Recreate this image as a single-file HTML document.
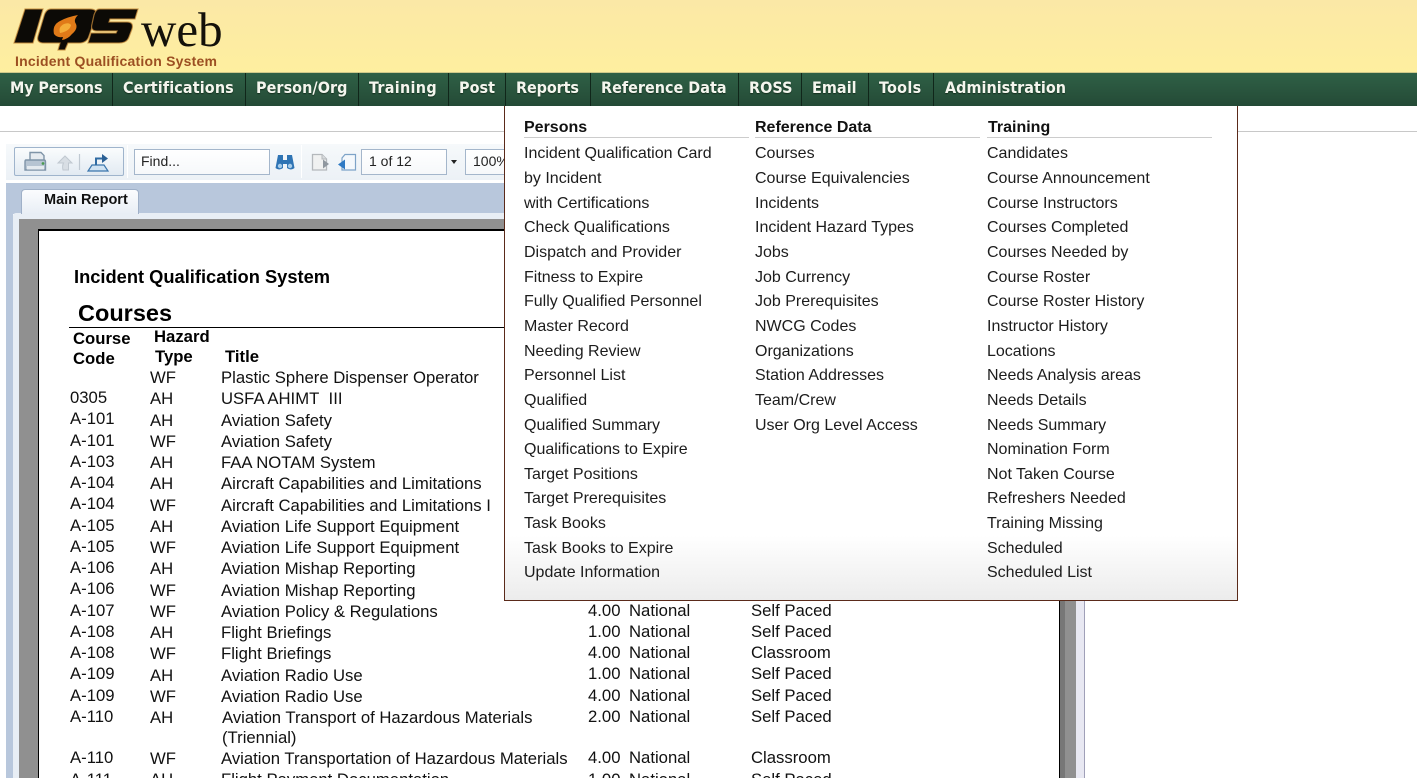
<!DOCTYPE html>
<html><head><meta charset="utf-8"><style>
html{margin:0;padding:0;background:#fff;width:1417px;height:778px;overflow:hidden}
body{margin:0;padding:0;width:1417px;height:778px;position:relative;overflow:hidden;font-family:"Liberation Sans",Arial,sans-serif;color:#000}
.a{position:absolute;white-space:nowrap}
.bx{position:absolute}
.w{position:absolute;left:0;width:0;height:0}
.nav{position:absolute;top:73px;height:33px;line-height:30px;color:#f4f6ee;font-family:"DejaVu Sans Condensed","DejaVu Sans",sans-serif;font-stretch:condensed;font-size:16px;font-weight:bold;letter-spacing:.05px;white-space:nowrap;text-shadow:0 1px 1px #16301f}
.sep{position:absolute;top:73px;height:33px;width:1px;background:#10261a}
.m{position:absolute;font-size:16px;line-height:20px;color:#1c1c1c;white-space:nowrap}
.mh{position:absolute;font-size:16px;line-height:20px;font-weight:bold;color:#111;white-space:nowrap}
.r{position:absolute;font-size:16.7px;line-height:20px;color:#111;white-space:nowrap}
.b{font-weight:bold;color:#000}
</style></head><body>
<div class="bx" style="left:0;top:0;width:1417px;height:73px;background:linear-gradient(#fbe8a6,#feef9f)"></div>
<svg class="bx" style="left:0;top:0" width="240" height="73" viewBox="0 0 240 73">
<g fill="#0c0a06" stroke="#c58a3a" stroke-width="1.2" stroke-opacity=".75">
<path d="M25 9H43L33 43H14Z"/>
<path d="M51 9H90Q98 9 96 16L89 36Q87 43 79 43H68L65 50H58L60 43H44Q36 43 38 36L44 16Q46 9 51 9Z"/>
<path d="M99 9H138L135 19H110L109 22H127Q134 22 132 29L129 37Q127 43 119 43H88L91 33H116L117 31H97Q90 31 92 24L94 15Q96 9 99 9Z"/>
</g>
<path d="M54 34Q52 25 60 21Q67 17 78 15Q73 20 76 24Q78 29 72 34Q68 39 62 40L63 37Q57 38 54 34Z" fill="#e07a18"/>
<path d="M60 33Q58 27 64 24Q69 22 71 25Q70 31 60 33Z" fill="#f4ad38"/>
<text x="141" y="46" font-family="Liberation Serif,serif" font-size="49" fill="#14110a">web</text>
<text x="15" y="66" font-family="Liberation Sans,sans-serif" font-size="14" font-weight="bold" fill="#9c4f22" textLength="202">Incident Qualification System</text>
</svg>

<div class="bx" style="left:0;top:73px;width:1417px;height:33px;background:linear-gradient(#2f6046,#244a36)"></div>
<div class="bx" style="left:0;top:72px;width:1417px;height:1px;background:#cfc98a"></div>
<div class="nav" style="left:10px;letter-spacing:-.1px">My Persons</div><div class="sep" style="left:112px"></div>
<div class="nav" style="left:123px;letter-spacing:.12px">Certifications</div><div class="sep" style="left:245px"></div>
<div class="nav" style="left:256px">Person/Org</div><div class="sep" style="left:358px"></div>
<div class="nav" style="left:369px;letter-spacing:.3px">Training</div><div class="sep" style="left:448px"></div>
<div class="nav" style="left:459px">Post</div><div class="sep" style="left:505px"></div>
<div class="nav" style="left:516px;letter-spacing:-.1px">Reports</div><div class="sep" style="left:590px"></div>
<div class="nav" style="left:601px;letter-spacing:0">Reference Data</div><div class="sep" style="left:738px"></div>
<div class="nav" style="left:749px">ROSS</div><div class="sep" style="left:801px"></div>
<div class="nav" style="left:812px">Email</div><div class="sep" style="left:868px"></div>
<div class="nav" style="left:879px;letter-spacing:.3px">Tools</div><div class="sep" style="left:933px"></div>
<div class="nav" style="left:945px;letter-spacing:.02px">Administration</div>

<div class="bx" style="left:0;top:131px;width:1417px;height:1px;background:#c8c8c8"></div>

<!-- report viewer -->
<div class="bx" style="left:6px;top:144px;width:1078px;height:36px;background:linear-gradient(#f6f9fb,#ecf1f6)"></div>
<div class="bx" style="left:11px;top:180px;width:1073px;height:2px;background:#fff"></div>
<div class="bx" style="left:6px;top:183px;width:1078px;height:31px;background:#b8c7dc"></div>
<div class="bx" style="left:6px;top:214px;width:7px;height:564px;background:#b8c7dc"></div>
<div class="bx" style="left:13px;top:213px;width:1071px;height:565px;background:#e8eef5;border-radius:3px 0 0 0"></div>
<div class="bx" style="left:1076px;top:213px;width:8px;height:565px;background:#e8e8f2"></div>
<div class="bx" style="left:1084px;top:213px;width:1px;height:565px;background:#a0a0b8"></div>
<div class="bx" style="left:19px;top:219px;width:1057px;height:559px;background:#909090"></div>
<div class="bx" style="left:1060px;top:229px;width:5px;height:549px;background:#777"></div>
<div class="bx" style="left:38px;top:229px;width:1020px;height:549px;background:#fff;border:solid #000;border-width:2px 1px 0 1px"></div>

<!-- tab -->
<div class="bx" style="left:21px;top:189px;width:116px;height:24px;background:linear-gradient(#fbfcfe,#e8eef5);border:1px solid #9fb0c8;border-bottom:0;border-radius:4px 4px 0 0"></div>
<div class="a" style="left:44px;top:191px;font-size:14.5px;line-height:18px;font-weight:bold;color:#111">Main Report</div>

<!-- toolbar -->
<div class="bx" style="left:14px;top:147px;width:108px;height:27px;border:1px solid #9fb4cc;border-radius:2px;background:linear-gradient(#fafcfd,#e2eaf2)"></div>
<svg class="bx" style="left:20px;top:148px" width="104" height="28" viewBox="0 0 104 28">
<path d="M10 4.500H21L24 7.500V13H10Z" fill="#e6ebf0" stroke="#7f94a8" stroke-width="1.4"/>
<path d="M6 12H24Q25.500 12 25.500 14V22H5V14Q5 12 6 12Z" fill="#b6c4d2" stroke="#7f94a8" stroke-width="1.4"/>
<rect x="7" y="18" width="17" height="3.500" fill="#e4eaef"/><circle cx="23" cy="15.500" r="1.400" fill="#4a9a50"/>
<path d="M45 8L52 15H48.500V22H43Q42 18 43.500 15H38Z" fill="#d8dee4" stroke="#c0c8d0"/>
<path d="M59.500 6V22" stroke="#c0c9d2" stroke-width="1.200"/>
<path d="M72 17H84L88 23H68Z" fill="#cfe2f2" stroke="#3a76ad" stroke-width="1.200"/>
<path d="M76 17V10.500H82" fill="none" stroke="#2f6ba3" stroke-width="2"/>
<path d="M82 6L88 10.500L82 15Z" fill="#2a5f94"/>
</svg>
<div class="bx" style="left:127px;top:145px;width:1px;height:33px;background:#fff"></div>
<div class="bx" style="left:134px;top:149px;width:134px;height:24px;background:linear-gradient(#fff,#f6f8fa);border:1px solid #a4b6cb"></div>
<div class="a" style="left:141px;top:152px;font-size:14px;line-height:18px;color:#222">Find...</div>
<svg class="bx" style="left:275px;top:154px" width="20" height="17" viewBox="0 0 20 17">
<path d="M3 1H8V6H12V1H17L19.500 14Q16 17 12 14V10H8V14Q4 17 .5 14Z" fill="#2f74b4"/><circle cx="5" cy="12" r="2.200" fill="#a8cdea"/><circle cx="15" cy="12" r="2.200" fill="#a8cdea"/>
</svg>
<div class="bx" style="left:301px;top:145px;width:1px;height:33px;background:#fff"></div>
<svg class="bx" style="left:309px;top:151px" width="48" height="22" viewBox="0 0 48 22">
<path d="M3.500 3.500H13L17.500 8V19H3.500Z" fill="#f0f1f1" stroke="#b4b8bc" stroke-width="1.300"/><path d="M13 3.500V8H17.500" fill="#d8dbde" stroke="#b4b8bc"/><path d="M14 8.500L20 13L14 17.500Z" fill="#8f979f"/>
<path d="M36 3.500H46.500V19H33V7Z" fill="#f4f8fc" stroke="#7da3c8" stroke-width="1.200"/><path d="M36 8.500L29 13.500L36 18.500Z" fill="#2f7ac4"/>
</svg>
<div class="bx" style="left:361px;top:149px;width:84px;height:24px;background:linear-gradient(#fff,#f6f8fa);border:1px solid #a4b6cb"></div>
<div class="a" style="left:369px;top:152px;font-size:14px;line-height:18px;color:#222">1 of 12</div>
<div class="bx" style="left:451px;top:160px;width:0;height:0;border:3.5px solid transparent;border-top:4px solid #222;border-bottom:0"></div>
<div class="bx" style="left:465px;top:149px;width:60px;height:24px;background:linear-gradient(#fff,#f6f8fa);border:1px solid #a4b6cb"></div>
<div class="a" style="left:473px;top:152px;font-size:14px;line-height:18px;color:#222">100%</div>

<!-- report content -->
<div class="a b" style="left:74px;top:266px;font-size:18.3px;line-height:22px">Incident Qualification System</div>
<div class="a b" style="left:78px;top:299px;font-size:23.5px;line-height:28px">Courses</div>
<div class="bx" style="left:69px;top:327px;width:440px;height:1px;background:#000"></div>
<div class="w" style="top:1px">
<div class="r b" style="left:73px;top:328px">Course</div>
<div class="r b" style="left:73px;top:348px">Code</div>
<div class="r b" style="left:154px;top:326px">Hazard</div>
<div class="r b" style="left:155px;top:346px">Type</div>
<div class="r b" style="left:225px;top:346px">Title</div>

<div class="r" style="left:150px;top:367px">WF</div><div class="r" style="left:221px;top:367px">Plastic Sphere Dispenser Operator</div>
<div class="r" style="left:70px;top:387px">0305</div><div class="r" style="left:150px;top:388px">AH</div><div class="r" style="left:221px;top:388px">USFA AHIMT&nbsp; III</div>
<div class="r" style="left:70px;top:408px">A-101</div><div class="r" style="left:150px;top:410px">AH</div><div class="r" style="left:221px;top:410px">Aviation Safety</div>
<div class="r" style="left:70px;top:430px">A-101</div><div class="r" style="left:150px;top:431px">WF</div><div class="r" style="left:221px;top:431px">Aviation Safety</div>
<div class="r" style="left:70px;top:451px">A-103</div><div class="r" style="left:150px;top:452px">AH</div><div class="r" style="left:221px;top:452px">FAA NOTAM System</div>
<div class="r" style="left:70px;top:472px">A-104</div><div class="r" style="left:150px;top:473px">AH</div><div class="r" style="left:221px;top:473px">Aircraft Capabilities and Limitations</div>
<div class="r" style="left:70px;top:493px">A-104</div><div class="r" style="left:150px;top:495px">WF</div><div class="r" style="left:221px;top:495px">Aircraft Capabilities and Limitations I</div>
<div class="r" style="left:70px;top:515px">A-105</div><div class="r" style="left:150px;top:516px">AH</div><div class="r" style="left:221px;top:516px">Aviation Life Support Equipment</div>
<div class="r" style="left:70px;top:536px">A-105</div><div class="r" style="left:150px;top:537px">WF</div><div class="r" style="left:221px;top:537px">Aviation Life Support Equipment</div>
<div class="r" style="left:70px;top:557px">A-106</div><div class="r" style="left:150px;top:558px">AH</div><div class="r" style="left:221px;top:558px">Aviation Mishap Reporting</div>
<div class="r" style="left:70px;top:578px">A-106</div><div class="r" style="left:150px;top:580px">WF</div><div class="r" style="left:221px;top:580px">Aviation Mishap Reporting</div>
<div class="r" style="left:70px;top:600px">A-107</div><div class="r" style="left:150px;top:601px">WF</div><div class="r" style="left:221px;top:601px">Aviation Policy &amp; Regulations</div><div class="r" style="left:588px;top:600px">4.00</div><div class="r" style="left:629px;top:600px">National</div><div class="r" style="left:751px;top:600px">Self Paced</div>
<div class="r" style="left:70px;top:621px">A-108</div><div class="r" style="left:150px;top:622px">AH</div><div class="r" style="left:221px;top:622px">Flight Briefings</div><div class="r" style="left:588px;top:621px">1.00</div><div class="r" style="left:629px;top:621px">National</div><div class="r" style="left:751px;top:621px">Self Paced</div>
<div class="r" style="left:70px;top:642px">A-108</div><div class="r" style="left:150px;top:643px">WF</div><div class="r" style="left:221px;top:643px">Flight Briefings</div><div class="r" style="left:588px;top:642px">4.00</div><div class="r" style="left:629px;top:642px">National</div><div class="r" style="left:751px;top:642px">Classroom</div>
<div class="r" style="left:70px;top:663px">A-109</div><div class="r" style="left:150px;top:665px">AH</div><div class="r" style="left:221px;top:665px">Aviation Radio Use</div><div class="r" style="left:588px;top:663px">1.00</div><div class="r" style="left:629px;top:663px">National</div><div class="r" style="left:751px;top:663px">Self Paced</div>
<div class="r" style="left:70px;top:685px">A-109</div><div class="r" style="left:150px;top:686px">WF</div><div class="r" style="left:221px;top:686px">Aviation Radio Use</div><div class="r" style="left:588px;top:685px">4.00</div><div class="r" style="left:629px;top:685px">National</div><div class="r" style="left:751px;top:685px">Self Paced</div>
<div class="r" style="left:70px;top:706px">A-110</div><div class="r" style="left:150px;top:707px">AH</div><div class="r" style="left:222px;top:707px">Aviation Transport of Hazardous Materials</div><div class="r" style="left:588px;top:706px">2.00</div><div class="r" style="left:629px;top:706px">National</div><div class="r" style="left:751px;top:706px">Self Paced</div>
<div class="r" style="left:222px;top:727px">(Triennial)</div>
<div class="r" style="left:70px;top:747px">A-110</div><div class="r" style="left:150px;top:748px">WF</div><div class="r" style="left:221px;top:748px">Aviation Transportation of Hazardous Materials</div><div class="r" style="left:588px;top:747px">4.00</div><div class="r" style="left:629px;top:747px">National</div><div class="r" style="left:751px;top:747px">Classroom</div>
<div class="r" style="left:70px;top:769px">A-111</div><div class="r" style="left:150px;top:769px">AH</div><div class="r" style="left:221px;top:769px">Flight Payment Documentation</div><div class="r" style="left:588px;top:769px">1.00</div><div class="r" style="left:629px;top:769px">National</div><div class="r" style="left:751px;top:769px">Self Paced</div>
</div>

<!-- dropdown -->
<div class="bx" style="left:504px;top:106px;width:732px;height:494px;background:linear-gradient(#fff 0,#fff 87%,#ececec 100%);border:solid #5a2a1a;border-width:0 1px 1px 1px"></div>
<div class="bx" style="left:524px;top:137px;width:225px;height:1px;background:#ccc"></div>
<div class="bx" style="left:755px;top:137px;width:225px;height:1px;background:#ccc"></div>
<div class="bx" style="left:987px;top:137px;width:225px;height:1px;background:#ccc"></div>
<div class="w" style="top:2px">
<div class="mh" style="left:524px;top:116px">Persons</div>
<div class="mh" style="left:755px;top:116px">Reference Data</div>
<div class="mh" style="left:988px;top:116px">Training</div>

<div class="m" style="left:524px;top:142px">Incident Qualification Card</div>
<div class="m" style="left:524px;top:167px">by Incident</div>
<div class="m" style="left:524px;top:192px">with Certifications</div>
<div class="m" style="left:524px;top:216px">Check Qualifications</div>
<div class="m" style="left:524px;top:241px">Dispatch and Provider</div>
<div class="m" style="left:524px;top:266px">Fitness to Expire</div>
<div class="m" style="left:524px;top:290px">Fully Qualified Personnel</div>
<div class="m" style="left:524px;top:315px">Master Record</div>
<div class="m" style="left:524px;top:340px">Needing Review</div>
<div class="m" style="left:524px;top:364px">Personnel List</div>
<div class="m" style="left:524px;top:389px">Qualified</div>
<div class="m" style="left:524px;top:414px">Qualified Summary</div>
<div class="m" style="left:524px;top:438px">Qualifications to Expire</div>
<div class="m" style="left:524px;top:463px">Target Positions</div>
<div class="m" style="left:524px;top:487px">Target Prerequisites</div>
<div class="m" style="left:524px;top:512px">Task Books</div>
<div class="m" style="left:524px;top:537px">Task Books to Expire</div>
<div class="m" style="left:524px;top:561px">Update Information</div>

<div class="m" style="left:755px;top:142px">Courses</div>
<div class="m" style="left:755px;top:167px">Course Equivalencies</div>
<div class="m" style="left:755px;top:192px">Incidents</div>
<div class="m" style="left:755px;top:216px">Incident Hazard Types</div>
<div class="m" style="left:755px;top:241px">Jobs</div>
<div class="m" style="left:755px;top:266px">Job Currency</div>
<div class="m" style="left:755px;top:290px">Job Prerequisites</div>
<div class="m" style="left:755px;top:315px">NWCG Codes</div>
<div class="m" style="left:755px;top:340px">Organizations</div>
<div class="m" style="left:755px;top:364px">Station Addresses</div>
<div class="m" style="left:755px;top:389px">Team/Crew</div>
<div class="m" style="left:755px;top:414px">User Org Level Access</div>

<div class="m" style="left:987px;top:142px">Candidates</div>
<div class="m" style="left:987px;top:167px">Course Announcement</div>
<div class="m" style="left:987px;top:192px">Course Instructors</div>
<div class="m" style="left:987px;top:216px">Courses Completed</div>
<div class="m" style="left:987px;top:241px">Courses Needed by</div>
<div class="m" style="left:987px;top:266px">Course Roster</div>
<div class="m" style="left:987px;top:290px">Course Roster History</div>
<div class="m" style="left:987px;top:315px">Instructor History</div>
<div class="m" style="left:987px;top:340px">Locations</div>
<div class="m" style="left:987px;top:364px">Needs Analysis areas</div>
<div class="m" style="left:987px;top:389px">Needs Details</div>
<div class="m" style="left:987px;top:414px">Needs Summary</div>
<div class="m" style="left:987px;top:438px">Nomination Form</div>
<div class="m" style="left:987px;top:463px">Not Taken Course</div>
<div class="m" style="left:987px;top:487px">Refreshers Needed</div>
<div class="m" style="left:987px;top:512px">Training Missing</div>
<div class="m" style="left:987px;top:537px">Scheduled</div>
<div class="m" style="left:987px;top:561px">Scheduled List</div>
</div>
</body></html>
